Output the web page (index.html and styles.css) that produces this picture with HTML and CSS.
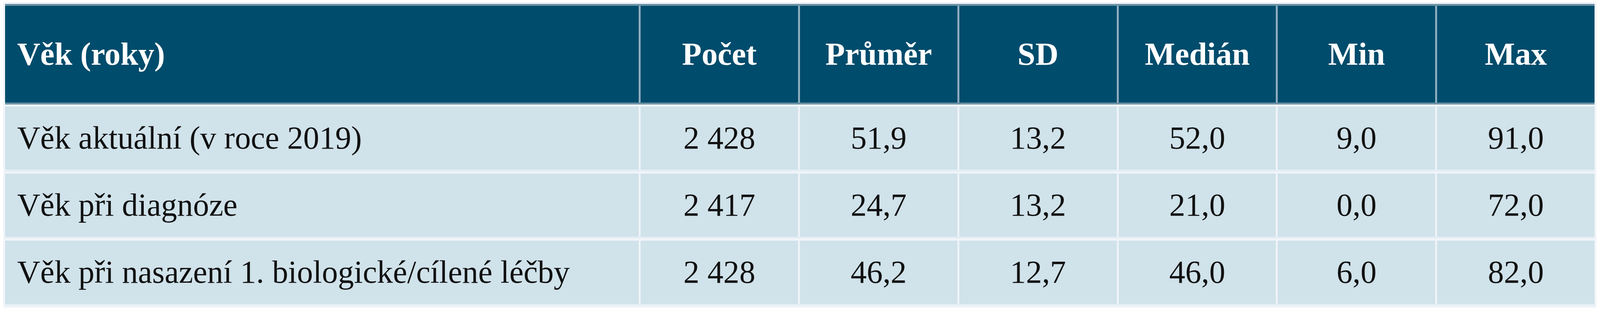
FILE: index.html
```html
<!DOCTYPE html>
<html lang="cs">
<head>
<meta charset="utf-8">
<title>Věk (roky)</title>
<link rel="stylesheet" href="styles.css">
</head>
<body>
<div class="table">
  <div class="row head">
    <div class="cell label">Věk (roky)</div>
    <div class="cell">Počet</div>
    <div class="cell">Průměr</div>
    <div class="cell">SD</div>
    <div class="cell">Medián</div>
    <div class="cell">Min</div>
    <div class="cell">Max</div>
  </div>
  <div class="row body">
    <div class="cell label">Věk aktuální (v roce 2019)</div>
    <div class="cell">2 428</div>
    <div class="cell">51,9</div>
    <div class="cell">13,2</div>
    <div class="cell">52,0</div>
    <div class="cell">9,0</div>
    <div class="cell">91,0</div>
  </div>
  <div class="row body">
    <div class="cell label">Věk při diagnóze</div>
    <div class="cell">2 417</div>
    <div class="cell">24,7</div>
    <div class="cell">13,2</div>
    <div class="cell">21,0</div>
    <div class="cell">0,0</div>
    <div class="cell">72,0</div>
  </div>
  <div class="row body">
    <div class="cell label">Věk při nasazení 1. biologické/cílené léčby</div>
    <div class="cell">2 428</div>
    <div class="cell">46,2</div>
    <div class="cell">12,7</div>
    <div class="cell">46,0</div>
    <div class="cell">6,0</div>
    <div class="cell">82,0</div>
  </div>
</div>
</body>
</html>
```
FILE: styles.css
```css
html, body {
  margin: 0;
  padding: 0;
  background: #ffffff;
  overflow: hidden;
}

.table {
  box-sizing: border-box;
  margin: 5px 0.22vw 0 0.2vw;
  padding: 5px;
  background: #f1f5f9;
  display: flex;
  flex-direction: column;
  gap: 5px;
  font-family: "Liberation Serif", "Times New Roman", serif;
  font-size: 2vw;
  line-height: 1;
}

.row {
  display: grid;
  grid-template-columns: 1945fr repeat(6, 483fr);
  column-gap: 5px;
}

.cell {
  display: flex;
  align-items: center;
  justify-content: center;
  white-space: nowrap;
  min-width: 0;
}

.cell.label {
  justify-content: flex-start;
  padding-left: 0.75vw;
}

.head {
  background: #8eadbf;
  border-top: 5px solid #6a92a7;
  border-bottom: 5px solid #6a92a7;
}

.head .cell {
  height: 248px;
  background: #004c6c;
  color: #ffffff;
  font-weight: bold;
}

.body {
  background: #eef3f8;
  border-bottom: 5px solid #e6eef5;
}

.body .cell {
  height: 162px;
  background: #d0e2ea;
  color: #111111;
}
```
